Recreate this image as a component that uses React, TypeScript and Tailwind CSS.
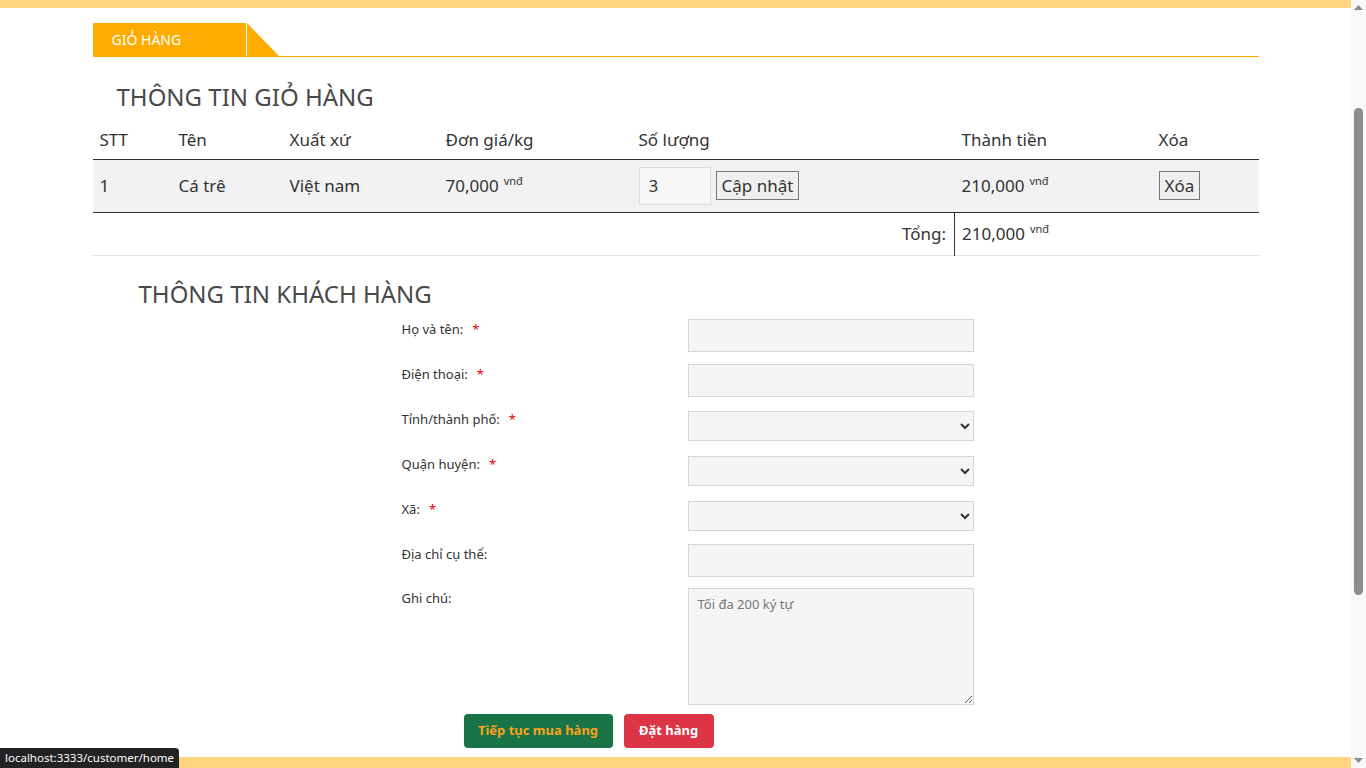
import { useEffect, useRef } from 'react';

const font = { fontFamily: '"Noto Sans", "Open Sans", sans-serif' };

const Vnd = () => <sup className="ml-[5px] text-[11px] align-[1px]">vnđ</sup>;

const fields = [
  { label: 'Họ và tên:', req: true, kind: 'input', mt: 'mt-[9px]', h: 'h-[33px]' },
  { label: 'Điện thoại:', req: true, kind: 'input', mt: 'mt-[12px]', h: 'h-[33px]' },
  { label: 'Tỉnh/thành phố:', req: true, kind: 'select', mt: 'mt-[14px]', h: 'h-[30px]' },
  { label: 'Quận huyện:', req: true, kind: 'select', mt: 'mt-[15px]', h: 'h-[30px]' },
  { label: 'Xã:', req: true, kind: 'select', mt: 'mt-[15px]', h: 'h-[30px]' },
  { label: 'Địa chỉ cụ thể:', req: false, kind: 'input', mt: 'mt-[13px]', h: 'h-[33px]' },
];

// browser-style vertical scrollbar, drawn since the headless window hides its own
const Scrollbar = () => (
  <div className="flex h-screen w-[15px] shrink-0 flex-col bg-[#f8f8f8]">
    <div className="flex h-[15px] items-center justify-center">
      <svg width="9" height="5" viewBox="0 0 9 5"><polygon points="4.5,0 9,5 0,5" fill="#8c8c8c" /></svg>
    </div>
    <div className="flex-1 px-[3px]">
      <div className="mt-[93px] h-[487px] rounded-full bg-[#8c8c8c]"></div>
    </div>
    <div className="flex h-[15px] items-center justify-center">
      <svg width="9" height="5" viewBox="0 0 9 5"><polygon points="0,0 9,0 4.5,5" fill="#8c8c8c" /></svg>
    </div>
  </div>
);

export default function App() {
  const scroller = useRef<HTMLDivElement>(null);

  useEffect(() => {
    if (scroller.current) scroller.current.scrollTop = 147;
  }, []);

  return (
    <div className="flex h-screen text-[#333]" style={font}>
      <div ref={scroller} className="h-screen flex-1 overflow-y-scroll bg-white [scrollbar-width:none]">
        <div className="h-[155px] bg-[#ffd580]"></div>

        <main className="bg-white pb-[9px]">
          <div className="mx-auto w-[1166px] pt-[15px]">
            {/* tab */}
            <div className="flex items-end border-b border-[#ffab00]">
              <div className="flex h-[33px] w-[153px] items-center bg-[#ffab00] pl-[19px] text-[14px] text-white">
                GIỎ HÀNG
              </div>
              <div className="h-[33px] w-px bg-white"></div>
              <svg width="32" height="33" viewBox="0 0 32 33" className="block">
                <polygon points="0,0 32,33 0,33" fill="#ffab00" />
              </svg>
            </div>

            <h3 className="mt-[24px] pl-[24px] text-[24px] leading-[32px] text-[#4a4a4a]">
              THÔNG TIN GIỎ HÀNG
            </h3>

            <table className="mt-[7px] w-full table-fixed border-collapse text-[17px]">
              <colgroup>
                <col className="w-[79px]" />
                <col className="w-[111px]" />
                <col className="w-[156px]" />
                <col className="w-[193px]" />
                <col className="w-[323px]" />
                <col className="w-[197px]" />
                <col className="w-[107px]" />
              </colgroup>
              <thead>
                <tr className="h-[39px] border-b border-[#333] text-left">
                  {['STT', 'Tên', 'Xuất xứ', 'Đơn giá/kg', 'Số lượng', 'Thành tiền', 'Xóa'].map(h => (
                    <th key={h} className="px-[7px] font-normal">{h}</th>
                  ))}
                </tr>
              </thead>
              <tbody>
                <tr className="h-[53px] border-b border-[#333] bg-[#f2f2f2]">
                  <td className="px-[7px]">1</td>
                  <td className="px-[7px]">Cá trê</td>
                  <td className="px-[7px]">Việt nam</td>
                  <td className="px-[7px]">70,000<Vnd /></td>
                  <td className="px-[7px]">
                    <div className="flex items-center gap-[5px]">
                      <input
                        defaultValue="3"
                        className="h-[38px] w-[72px] border border-[#ddd] bg-[#f7f7f7] px-[9px] text-[17px] outline-none"
                      />
                      <button className="h-[29px] border border-[#767676] bg-[#efefef] px-[5px] text-[17px] leading-none">
                        Cập nhật
                      </button>
                    </div>
                  </td>
                  <td className="px-[7px]">210,000<Vnd /></td>
                  <td className="px-[7px]">
                    <button className="h-[29px] border border-[#767676] bg-[#efefef] px-[5px] text-[17px] leading-none">
                      Xóa
                    </button>
                  </td>
                </tr>
                <tr className="h-[43px] border-b border-[#e3e3e3]">
                  <td colSpan={5} className="pr-[8px] text-right">Tổng:</td>
                  <td colSpan={2} className="border-l border-[#333] px-[7px]">210,000<Vnd /></td>
                </tr>
              </tbody>
            </table>

            <h3 className="mt-[22px] pl-[46px] text-[24px] leading-[32px] text-[#4a4a4a]">
              THÔNG TIN KHÁCH HÀNG
            </h3>

            <form className="ml-[309px] w-[572px] text-[13px]">
              {fields.map(f => (
                <div key={f.label} className={`flex ${f.mt}`}>
                  <label className={`w-[286px] ${f.kind === 'select' ? 'pt-0' : 'pt-[2px]'} leading-[16px]`}>
                    {f.label}
                    {f.req && <span className="ml-[9px] text-[#e00]">*</span>}
                  </label>
                  {f.kind === 'input' ? (
                    <input className={`${f.h} w-[286px] border border-[#d6d6d6] bg-[#f5f5f5] px-2 outline-none`} />
                  ) : (
                    <select className={`${f.h} w-[286px] border border-[#d6d6d6] bg-[#f5f5f5] px-1 outline-none`}>
                      <option></option>
                    </select>
                  )}
                </div>
              ))}
              <div className="mt-[11px] flex">
                <label className="w-[286px] pt-[2px] leading-[16px]">Ghi chú:</label>
                <textarea
                  placeholder="Tối đa 200 ký tự"
                  className="h-[117px] w-[286px] border border-[#d6d6d6] bg-[#f5f5f5] px-[9px] py-[6px] text-[13px] outline-none placeholder:text-[#777]"
                ></textarea>
              </div>
              <div className="mt-[9px] ml-[62px] flex gap-[11px]">
                <button type="button" className="h-[34px] w-[149px] rounded-[4px] bg-[#187347] text-[13px] font-bold text-[#f7a21b]">
                  Tiếp tục mua hàng
                </button>
                <button type="button" className="h-[34px] w-[90px] rounded-[4px] bg-[#dc3545] text-[13px] font-bold text-white">
                  Đặt hàng
                </button>
              </div>
            </form>
          </div>
        </main>

        <footer className="h-[260px] bg-[#ffd580]"></footer>
      </div>

      <Scrollbar />

      <div className="fixed bottom-0 left-0 flex h-[20px] items-center rounded-tr-[4px] bg-[#222] px-[5px] text-[11.5px] text-white">
        localhost:3333/customer/home
      </div>
    </div>
  );
}
